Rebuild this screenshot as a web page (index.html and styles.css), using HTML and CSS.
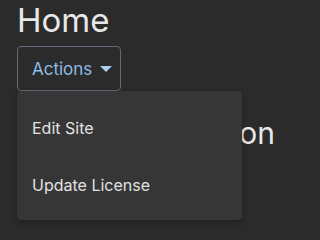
FILE: index.html
```html
<!DOCTYPE html>
<html lang="en">
<head>
<meta charset="utf-8">
<link rel="stylesheet" href="styles.css">
</head>
<body>
<main class="page">
  <h1 class="title">Home</h1>
  <div class="actions">
    <button class="btn" type="button">Actions <span class="caret"></span></button>
    <ul class="menu">
      <li class="menu-item">Edit Site</li>
      <li class="menu-item">Update License</li>
    </ul>
  </div>
  <h2 class="subtitle">Site Information</h2>
</main>
</body>
</html>
```
FILE: styles.css
```css
html, body {
  margin: 0;
  padding: 0;
  background: #2b2b2b;
  height: 100%;
}
body {
  font-family: Inter, "Noto Sans", sans-serif;
  color: #e4e4e4;
  overflow: hidden;
}
.page {
  padding: 0 0 0 17px;
}
.title {
  margin: 0;
  font-size: 33px;
  font-weight: 400;
  line-height: 40px;
  color: #e8e8e8;
}
.actions {
  position: relative;
  margin-top: 6px;
}
.btn {
  display: flex;
  align-items: center;
  gap: 8px;
  box-sizing: border-box;
  width: 104px;
  height: 45px;
  padding: 0 0 0 14px;
  background: transparent;
  border: 1px solid #5f6b78;
  border-radius: 4px;
  color: #8fbbe6;
  font-family: inherit;
  font-size: 17px;
}
.caret {
  width: 0;
  height: 0;
  border-left: 6px solid transparent;
  border-right: 6px solid transparent;
  border-top: 6px solid #a9cdf0;
}
.menu {
  position: absolute;
  top: 45px;
  left: 0;
  z-index: 2;
  box-sizing: border-box;
  width: 225px;
  margin: 0;
  padding: 8px 0 7px;
  list-style: none;
  background: #363636;
  border-radius: 4px;
  box-shadow: 0 2px 6px rgba(0,0,0,0.3);
}
.menu-item {
  display: flex;
  align-items: center;
  height: 57px;
  padding: 0 15px;
  font-size: 16px;
  color: #e2e2e2;
}
.subtitle {
  width: 258px;
  margin: 22px 0 0;
  font-size: 30px;
  font-weight: 400;
  line-height: 40px;
  text-align: right;
  white-space: nowrap;
  color: #e8e8e8;
}
```
